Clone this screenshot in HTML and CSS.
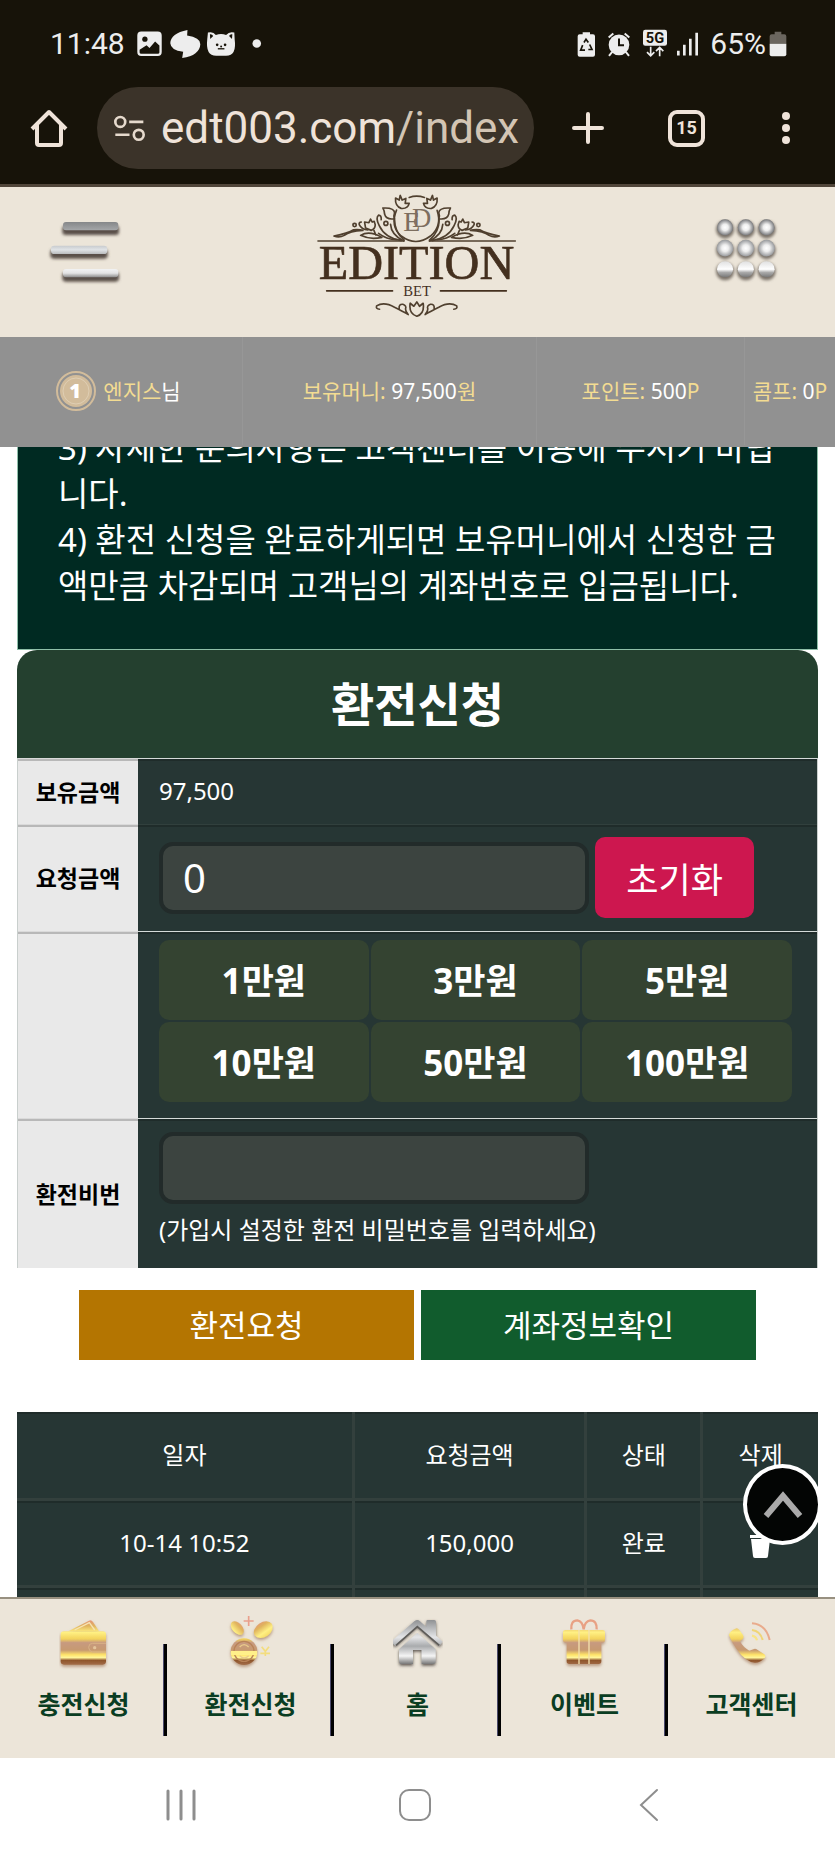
FILE: index.html
```html
<!DOCTYPE html>
<html lang="ko">
<head>
	<meta charset="utf-8">
	<meta name="viewport" content="width=device-width, initial-scale=1">
	<title>EDITION BET</title>
	<link rel="stylesheet" href="styles.css">
</head>
<body>
	<div class="browser">
		<div class="status">
			<span class="status-text">11:48</span>
			<svg class="status-left" viewBox="405 80 390 100" width="130" height="33" fill="#ededed">
				<path fill-rule="evenodd" d="M422 94h50q12 0 12 12v50q0 12-12 12h-50q-12 0-12-12v-50q0-12 12-12zM417 149v8q0 4 5 4h50q5 0 5-4v-21l-13-12-17 20-9-9z"/>
				<circle cx="433" cy="117" r="8" fill="#171309"/>
				<path d="M562 89q-51 10-52 40 1 21 39 26l-3 19q53-8 55-42 0-20-40-26z"/>
				<path d="M624 97q16-4 24 7 16-6 31 0 10-11 25-7l1 20q7 50-26 50h-30q-33 0-27-50z"/>
				<path fill="#171309" d="M630 102q7-1 10 5l-9 9zM698 102q-7-1-10 5l9 9z"/>
				<g fill="#171309"><circle cx="652" cy="134" r="4"/><circle cx="676" cy="134" r="4"/><circle cx="664" cy="139" r="3"/><path d="M654 144h20v4h-20z"/></g>
				<circle cx="772" cy="130" r="13"/>
			</svg>
			<svg class="status-right" viewBox="483 80 369 95" width="123" height="32" fill="#ededed">
				<path d="M491 98h9v-6h22v6h9q6 0 6 6v56q0 6-6 6h-40q-6 0-6-6v-56q0-6 6-6z"/>
				<path d="M504 123l6-10 7 10M521 129l7 15h-11M507 146h-13l6-15" fill="none" stroke="#171309" stroke-width="5"/>
				<circle cx="609" cy="130" r="31"/>
				<path d="M578 108l14-12M640 108l-14-12M588 152l-9 11M630 152l9 11" stroke="#ededed" stroke-width="6"/>
				<path d="M609 111v20h15" fill="none" stroke="#171309" stroke-width="6"/>
				<rect x="681" y="85" width="72" height="48" rx="7"/>
				<text x="717" y="125" text-anchor="middle" font-family="Roboto, sans-serif" font-size="44" font-weight="700" fill="#171309">5G</text>
				<path d="M704 136v26M693 152l11 11 11-11M731 164v-25M720 149l11-11 11 11" fill="none" stroke="#ededed" stroke-width="5"/>
				<path d="M783 148h8v14h-8zM801 130h8v32h-8zM819 112h8v50h-8zM838 94h8v68h-8z"/>
			</svg>
			<span class="status-text">65%</span>
			<svg class="battery" viewBox="1060 90 54 78" width="18" height="26">
				<path d="M1068 100h9v-8h20v8h9q6 0 6 6v22h-50v-22q0-6 6-6z" fill="#6b665f"/>
				<path d="M1062 128h50v32q0 6-6 6h-38q-6 0-6-6z" fill="#ededed"/>
			</svg>
		</div>
		<div class="toolbar">
			<button type="button" class="tool" aria-label="홈">
				<svg viewBox="0 0 38 38" width="38" height="38" fill="none" stroke="#efe3d9" stroke-width="4" stroke-linejoin="round"><path d="M2 20L19 3l17 17M7 16v18q0 2 2 2h20q2 0 2-2V16"/></svg>
			</button>
			<button type="button" class="address">
				<svg viewBox="344 344 94 80" width="31" height="27" fill="none" stroke="#e6dacd" stroke-width="8"><circle cx="363" cy="364" r="15"/><path d="M390 364h43M348 403h43"/><circle cx="419" cy="403" r="15"/></svg>
				<span>edt003.com<span class="path">/index</span></span>
			</button>
			<div class="tools">
				<button type="button" class="tool" aria-label="새 탭">
					<svg viewBox="0 0 32 32" width="32" height="32" stroke="#efe3d9" stroke-width="4" stroke-linecap="round"><path d="M16 2v28M2 16h28"/></svg>
				</button>
				<button type="button" class="tool tabs">15</button>
				<button type="button" class="tool" aria-label="메뉴">
					<svg viewBox="0 0 10 34" width="10" height="34" fill="#efe3d9"><circle cx="5" cy="5" r="4"/><circle cx="5" cy="17" r="4"/><circle cx="5" cy="29" r="4"/></svg>
				</button>
			</div>
		</div>
	</div>

	<header class="site-header">
		<div class="brand">
			<button type="button" class="tool" aria-label="전체메뉴">
				<svg viewBox="140 119 225 195" width="75" height="65">
					<defs>
						<linearGradient id="bar1" x2="0" y2="1"><stop offset="0" stop-color="#858789"/><stop offset="1" stop-color="#a5a7a9"/></linearGradient>
						<linearGradient id="bar2" x2="0" y2="1"><stop offset="0" stop-color="#c8cbce"/><stop offset=".5" stop-color="#e0e3e6"/><stop offset="1" stop-color="#b9bbbd"/></linearGradient>
						<linearGradient id="bar3" x2="0" y2="1"><stop offset="0" stop-color="#f2f3f4"/><stop offset=".5" stop-color="#e3e3e4"/><stop offset="1" stop-color="#8b8b8b"/></linearGradient>
						<filter id="soft" x="-20%" y="-60%" width="140%" height="260%"><feGaussianBlur stdDeviation="5"/></filter>
					</defs>
					<g fill="#5a5048" filter="url(#soft)"><rect x="186" y="136" width="170" height="28" rx="10"/><rect x="150" y="207" width="172" height="28" rx="10"/><rect x="186" y="276" width="170" height="28" rx="10"/></g>
					<rect x="188" y="125" width="166" height="25" rx="9" fill="url(#bar1)"/>
					<rect x="152" y="196" width="169" height="25" rx="10" fill="url(#bar2)"/>
					<rect x="188" y="266" width="166" height="25" rx="9" fill="url(#bar3)"/>
				</svg>
			</button>
			<a href="#" class="logo">
				<svg viewBox="50 21 610 390" width="203" height="130" fill="none" stroke="#50402f" stroke-width="5" stroke-linecap="round" stroke-linejoin="round">
					<path d="M56 183h258M391 183h258"/>
					<path d="M292 90q-20 48 14 78 44 33 88 0 36-30 20-77M330 52q22-8 46 0"/>
					<path d="M303 46l-3 14-11-6q-2 24 17 31 20 2 24-15l-12 0 2-15-11 5zM400 46l3 14 11-6q2 24-17 31-20 2-24-15l12 0-2-15 11 5z"/>
					<path d="M251 84q34-2 35 14-4 10 0 18-25 4-30-14 0-10-5-18zM454 84q-34-2-35 14 4 10 0 18 25 4 30-14 0-10 5-18z"/>
					<path d="M246 119q1-14-8-14-10 8 2 32 17 37 66 45M274 133q2 32 40 50M459 119q-1-14 8-14 10 8-2 32-17 37-66 45M431 133q-2 32-40 50"/>
					<path d="M286 118q0 38 29 62M420 118q0 38-29 62M238 160q24 18 53 19M467 160q-24 18-53 19"/>
					<circle cx="260" cy="130" r="6"/><circle cx="445" cy="130" r="6"/><circle cx="166" cy="135" r="5"/><circle cx="538" cy="135" r="5"/>
					<path d="M214 117l-5 11-13-2 3 18 17 7q12-5 12-17l-3-10-6 2zM491 117l5 11 13-2-3 18-17 7q-12-5-12-17l3-10 6 2z"/>
					<path d="M186 126q-8 0-6 8 7 15 26 16M519 126q8 0 6 8-7 15-26 16"/>
					<path d="M104 168q42-8 59-19 16-2 28 2-40 2-56 15-15 8-31 2zM601 168q-42-8-59-19-16-2-28 2 40 2 56 15 15 8 31 2z"/>
					<path d="M184 166q26-16 64 6-36 8-64-6zM521 166q-26-16-64 6 36 8 64-6zM224 151l6 14M481 151l-6 14"/>
					<path d="M82 333h198M424 333h198" stroke="#44301f"/>
					<path d="M241 388q-12-1-9-10 22-14 54 4 26 13 40 21M300 386q-2-14 11-13 12 4 8 14 0 8 8 17M464 388q12-1 9-10-22-14-54 4-26 13-40 21M405 386q2-14-11-13-12 4-8 14 0 8-8 17"/>
					<path d="M353 366l-9 13-11-9q-5 32 20 39 24-7 19-39l-11 9z"/>
					<g fill="#44301f" stroke="none" font-family="'Liberation Serif', serif" text-anchor="middle">
						<text x="338" y="153" font-size="84" fill="#7d6e5f">E</text>
						<text x="367" y="141" font-size="80" fill="#7d6e5f">D</text>
						<text x="352" y="298" font-size="145" stroke="#44301f" stroke-width="2">EDITION</text>
						<text x="354" y="347" font-size="44">BET</text>
					</g>
				</svg>
			</a>
			<button type="button" class="tool" aria-label="바로가기">
				<svg viewBox="540 119 200 200" width="67" height="67">
					<defs>
						<radialGradient id="ball" cy=".5"><stop offset="0" stop-color="#fff"/><stop offset=".4" stop-color="#eee"/><stop offset="1" stop-color="#96989b"/></radialGradient>
						<radialGradient id="ballDark"><stop offset="0" stop-color="#fff"/><stop offset=".4" stop-color="#eee"/><stop offset="1" stop-color="#77787b"/></radialGradient>
						<linearGradient id="ballHalf" x2="0" y2="1"><stop offset="0" stop-color="#e0e0e0"/><stop offset=".5" stop-color="#fff"/><stop offset=".7" stop-color="#aaa"/><stop offset="1" stop-color="#777"/></linearGradient>
						<filter id="softBall" x="-20%" y="-20%" width="140%" height="140%"><feGaussianBlur stdDeviation="5"/></filter>
					</defs>
					<g fill="#7a7269" filter="url(#softBall)"><circle cx="576" cy="150" r="27"/><circle cx="638" cy="150" r="27"/><circle cx="700" cy="150" r="27"/><circle cx="576" cy="212" r="27"/><circle cx="638" cy="212" r="27"/><circle cx="700" cy="212" r="27"/><circle cx="576" cy="275" r="27"/><circle cx="638" cy="275" r="27"/><circle cx="700" cy="275" r="27"/></g>
					<g fill="url(#ballDark)"><circle cx="576" cy="144" r="24"/><circle cx="638" cy="144" r="24"/><circle cx="700" cy="144" r="24"/></g>
					<g fill="url(#ball)"><circle cx="576" cy="206" r="25"/><circle cx="638" cy="206" r="25"/><circle cx="700" cy="206" r="25"/></g>
					<g fill="url(#ballHalf)"><circle cx="576" cy="269" r="24"/><circle cx="638" cy="269" r="24"/><circle cx="700" cy="269" r="24"/></g>
				</svg>
			</button>
		</div>
		<div class="wallet">
			<div class="user">
				<svg viewBox="0 0 42 42" width="42" height="42">
					<circle cx="21" cy="21" r="19" fill="none" stroke="#d2bc9b" stroke-width="2"/>
					<circle cx="21" cy="21" r="16" fill="#d2bc9b"/>
					<circle cx="21" cy="21" r="13" fill="none" stroke="#dfceb3" stroke-width="1"/>
					<text x="20" y="28" text-anchor="middle" font-family="Open Sans, sans-serif" font-size="20" font-weight="800" fill="#fff">1</text>
				</svg>
				<span>엔지스<b>님</b></span>
			</div>
			<div>보유머니: <b>97,500</b>원</div>
			<div>포인트: <b>500</b>P</div>
			<div>콤프: <b>0</b>P</div>
		</div>
	</header>

	<main>
		<div class="notice">
			<p>3) 자세한 문의사항은 고객센터를 이용해 주시기 바랍니다.</p>
			<p>4) 환전 신청을 완료하게되면 보유머니에서 신청한 금액만큼 차감되며 고객님의 계좌번호로 입금됩니다.</p>
		</div>

		<form>
			<h1>환전신청</h1>
			<table class="exchange">
				<tr>
					<th>보유금액</th>
					<td class="balance">97,500</td>
				</tr>
				<tr>
					<th><label for="amount">요청금액</label></th>
					<td class="amount">
						<div class="amount-row">
							<input type="text" id="amount" value="0">
							<button type="reset" class="reset">초기화</button>
						</div>
					</td>
				</tr>
				<tr class="line">
					<th></th>
					<td class="quick">
						<div class="quick-grid">
							<button type="button">1만원</button>
							<button type="button">3만원</button>
							<button type="button">5만원</button>
							<button type="button">10만원</button>
							<button type="button">50만원</button>
							<button type="button">100만원</button>
						</div>
					</td>
				</tr>
				<tr class="line">
					<th><label for="pin">환전비번</label></th>
					<td class="pin">
						<input type="password" id="pin">
						<p>(가입시 설정한 환전 비밀번호를 입력하세요)</p>
					</td>
				</tr>
			</table>
			<div class="actions">
				<button type="submit" class="request">환전요청</button>
				<button type="button" class="account">계좌정보확인</button>
			</div>
		</form>

		<table class="history">
			<colgroup>
				<col class="col-date">
				<col class="col-amount">
				<col class="col-state">
				<col>
			</colgroup>
			<tr>
				<th>일자</th>
				<th>요청금액</th>
				<th>상태</th>
				<th>삭제</th>
			</tr>
			<tr>
				<td>10-14 10:52</td>
				<td>150,000</td>
				<td>완료</td>
				<td>
					<button type="button" class="tool" aria-label="내역 삭제">
						<svg viewBox="0 0 24 26" width="24" height="26" fill="#fff"><path d="M1 3h6l2-2h6l2 2h6v3H1zM2 7h19l-2 17q0 2-2 2H6q-2 0-2-2z"/></svg>
					</button>
				</td>
			</tr>
			<tr><td></td><td></td><td></td><td></td></tr>
		</table>
	</main>

	<a href="#" class="to-top" aria-label="맨 위로">
		<svg viewBox="0 0 40 28" width="40" height="28" fill="none" stroke="#aaa" stroke-width="6"><path d="M3 25L20 5l17 20"/></svg>
	</a>

	<nav class="bottom-nav">
		<a href="#">
			<svg viewBox="175 75 150 165" width="50" height="55">
				<defs>
					<linearGradient id="gold" gradientUnits="userSpaceOnUse" x1="0" y1="88" x2="0" y2="228">
						<stop offset="0" stop-color="#e58e7c"/><stop offset=".14" stop-color="#e0b45e"/><stop offset=".28" stop-color="#fff083"/><stop offset=".42" stop-color="#f3d35c"/><stop offset=".5" stop-color="#c79a80"/><stop offset=".66" stop-color="#c79a70"/><stop offset=".76" stop-color="#ffe46a"/><stop offset=".82" stop-color="#fff59a"/><stop offset=".88" stop-color="#8f552c"/><stop offset="1" stop-color="#a87350"/>
					</linearGradient>
					<filter id="glow" x="-20%" y="-20%" width="140%" height="150%"><feGaussianBlur stdDeviation="1.5" result="body"/><feDropShadow in="body" dx="0" dy="6" stdDeviation="5" flood-color="#9a6a4a" flood-opacity=".6"/></filter>
				</defs>
				<g fill="url(#gold)" filter="url(#glow)">
					<path d="M203 124l62-32q7-3 12 4l18 28z"/>
					<path d="M190 124h116q10 0 10 10v80q0 10-10 10H190q-10 0-10-10v-80q0-10 10-10z"/>
				</g>
				<path d="M222 120l44-22 16 22" fill="none" stroke="#f6e3b4" stroke-width="4"/>
				<path d="M316 160h-40q-12 0-12 12t12 14h40" fill="none" stroke="#d8b186" stroke-width="3"/>
				<circle cx="282" cy="173" r="5" fill="#e3c49b"/>
			</svg>
			<span>충전신청</span>
		</a>
		<a href="#">
			<svg viewBox="677 75 150 165" width="50" height="55">
				<g fill="url(#gold)" filter="url(#glow)">
					<ellipse cx="711" cy="114" rx="24" ry="15" transform="rotate(48 711 114)"/>
					<ellipse cx="789" cy="119" rx="31" ry="22" transform="rotate(-35 789 119)"/>
					<circle cx="731" cy="185" r="40"/>
				</g>
				<path d="M784 170l11 14 11-14M795 184v14M780 190h29" fill="none" stroke="#f3dd7e" stroke-width="5"/>
				<path d="M745 78v30M730 93h30" stroke="#e9a08c" stroke-width="5"/>
				<circle cx="731" cy="184" r="30" fill="none" stroke="#b98358" stroke-width="4"/>
				<path d="M718 171q13-14 27 0M718 197q13 14 27 0" fill="none" stroke="#eacb8b" stroke-width="4"/>
				<path d="M692 189h78" stroke="#fff08a" stroke-width="12"/>
			</svg>
			<span>환전신청</span>
		</a>
		<a href="#">
			<svg viewBox="1177 75 150 165" width="50" height="55">
				<defs>
					<linearGradient id="silver" gradientUnits="userSpaceOnUse" x1="0" y1="88" x2="0" y2="222">
						<stop offset="0" stop-color="#8c8e90"/><stop offset=".4" stop-color="#e4e5e7"/><stop offset=".6" stop-color="#a9abad"/><stop offset=".82" stop-color="#f5f5f5"/><stop offset="1" stop-color="#777"/>
					</linearGradient>
					<filter id="shade" x="-20%" y="-20%" width="140%" height="150%"><feDropShadow dx="0" dy="5" stdDeviation="4" flood-color="#3b342e" flood-opacity=".8"/></filter>
				</defs>
				<g fill="url(#silver)" filter="url(#shade)">
					<path d="M1250 128l-55 50v36q0 8 8 8h34v-42h26v42h34q8 0 8-8v-36z"/>
					<path d="M1250 90q4 0 8 4l19 17v-17q0-4 4-4h20q5 0 5 5v42l20 18-10 12-66-58-66 58-13-12 70-61q5-4 9-4z"/>
				</g>
				<path d="M1186 166l64-56 66 56" fill="none" stroke="#5f5d5a" stroke-width="5"/>
			</svg>
			<span>홈</span>
		</a>
		<a href="#">
			<svg viewBox="432 75 150 165" width="50" height="55">
				<g fill="url(#gold)" filter="url(#glow)">
					<path d="M449 120h111q7 0 7 7v24q0 7-7 7h-4v56q0 8-8 8h-88q-8 0-8-8v-56h-4q-7 0-7-7v-24q0-7 8-7z"/>
				</g>
				<path d="M489 120v102M519 120v102" stroke="#f4e0ad" stroke-width="4"/>
				<path d="M466 118q-2-27 18-27 16 2 19 27 3-25 20-27 20 0 19 27" fill="none" stroke="#e8a184" stroke-width="7"/>
			</svg>
			<span>이벤트</span>
		</a>
		<a href="#">
			<svg viewBox="933 75 150 165" width="50" height="55">
				<g fill="url(#gold)" filter="url(#glow)">
					<path d="M958 116q7-3 12 4l11 15q4 6-1 12l-8 7q9 18 28 28l12-4q5-5 13 2l20 13q6 5 1 11-14 15-30 14-26-2-55-42-15-21-22-41 2-12 19-19z"/>
				</g>
				<path d="M1008 100q42 3 53 50" fill="none" stroke="#e9ab8c" stroke-width="6"/>
				<path d="M1008 120q25 3 32 30" fill="none" stroke="#f0d576" stroke-width="6"/>
				<path d="M1008 137q12 2 15 14" fill="none" stroke="#f8e486" stroke-width="7"/>
			</svg>
			<span>고객센터</span>
		</a>
	</nav>

	<div class="system-nav">
		<button type="button" class="tool" aria-label="최근 앱">
			<svg viewBox="0 0 32 32" width="32" height="32" stroke="#8e8e8e" stroke-width="3" stroke-linecap="round"><path d="M3 2v28M16 2v28M29 2v28"/></svg>
		</button>
		<button type="button" class="tool" aria-label="홈 화면">
			<svg viewBox="0 0 34 34" width="34" height="34" fill="none" stroke="#8e8e8e" stroke-width="2"><rect x="2" y="2" width="30" height="30" rx="9"/></svg>
		</button>
		<button type="button" class="tool" aria-label="뒤로">
			<svg viewBox="0 0 20 34" width="20" height="34" fill="none" stroke="#8e8e8e" stroke-width="2" stroke-linecap="round"><path d="M18 2L2 17l16 15"/></svg>
		</button>
	</div>
</body>
</html>
```

FILE: styles.css
```css
* {
	box-sizing: border-box;
}

body {
	margin: 0;
	height: 100vh;
	display: flex;
	flex-direction: column;
	overflow: hidden;
	background: #fff;
	color: #fff;
	font-family: 'Noto Sans', 'Noto Sans CJK KR', sans-serif;
	font-size: 24px;
	line-height: 36px;
}

button,
input {
	font-family: inherit;
	color: inherit;
	border: 0;
}

button {
	padding: 0;
}

a {
	text-decoration: none;
}

svg {
	display: block;
	flex: none;
}

p {
	margin: 0;
}

.tool {
	background: none;
}

/* browser bar */
.browser {
	flex: none;
	background: #171309;
	border-bottom: 3px solid #51463a;
	font-family: Roboto, sans-serif;
	position: relative;
	z-index: 2;
}

.status {
	display: flex;
	align-items: center;
	height: 87px;
	padding: 0 48px 0 50px;
	font-size: 30px;
	color: #ededed;
}

.status-left {
	margin-left: 10px;
}

.status-right {
	margin-left: auto;
	margin-right: 10px;
}

.battery {
	margin-left: 3px;
}

.toolbar {
	display: grid;
	grid-template-columns: 97px 1fr 301px;
	align-items: center;
	padding-bottom: 15px;
}

.toolbar > .tool {
	justify-self: center;
}

.address {
	display: flex;
	align-items: center;
	gap: 16px;
	min-width: 0;
	height: 82px;
	padding: 0 14px 0 17px;
	border-radius: 41px;
	background: #3b3329;
	color: #efe3d9;
	font-size: 44px;
	line-height: 52px;
	white-space: nowrap;
}

.address .path {
	color: #d3c5b4;
}

.tools {
	display: grid;
	grid-template-columns: repeat(3, 1fr);
	align-items: center;
	justify-items: center;
	padding-left: 4px;
}

.tabs {
	width: 37px;
	height: 37px;
	border: 4px solid #efe3d9;
	border-radius: 9px;
	color: #efe3d9;
	font-size: 18px;
	font-weight: 700;
	line-height: 28px;
}

/* site header */
.site-header {
	flex: none;
	position: relative;
	z-index: 2;
}

.brand {
	display: flex;
	align-items: center;
	justify-content: space-between;
	padding: 0 55px 20px 47px;
	background: #ece5d9;
}

.wallet {
	display: grid;
	grid-template-columns: 242fr 294fr 208fr 91fr;
	height: 110px;
	padding-bottom: 2px;
	background: #919191;
	color: #f3dc92;
	font-size: 21px;
	white-space: nowrap;
}

.wallet > div {
	display: flex;
	align-items: center;
	justify-content: center;
	white-space: pre;
	border-left: 1px solid #979797;
}

.wallet .user {
	gap: 6px;
	padding-right: 6px;
	border-left: 0;
}

.wallet b {
	font-weight: 400;
	color: #fff;
}

/* page content, scrolled a little under the header */
main {
	flex: 1;
	min-height: 0;
	margin-top: -63px;
	padding: 0 17px;
	overflow: hidden;
}

.notice {
	padding: 40px;
	border: 1px solid #8fbfa9;
	background: #002a22;
	font-size: 33px;
	line-height: 46px;
}

h1 {
	margin: 0;
	padding: 24px 0;
	border-radius: 20px 20px 0 0;
	background: #24402f;
	font-size: 47px;
	line-height: 60px;
	text-align: center;
}

.exchange {
	width: 100%;
	border-spacing: 0;
	border: solid #c9cfcd;
	border-width: 0 1px;
}

.exchange th {
	width: 120px;
	padding: 0;
	border-top: 1px solid #dadada;
	box-shadow: inset 0 2px 0 #b8b8b8;
	background: #e9e9e9;
	color: #000;
	font-size: 23px;
}

.exchange td {
	padding: 0 25px 0 21px;
	border-top: 1px solid #31403d;
	box-shadow: inset 0 2px 0 #1f2c2a;
	background: #263634;
}

.exchange tr:first-child td,
.exchange .line td {
	border-top-color: #d5dbd9;
}

.exchange .balance {
	padding-top: 14px;
	padding-bottom: 15px;
}

.exchange .amount {
	padding-top: 12px;
	padding-bottom: 13px;
}

.exchange .quick {
	padding-top: 8px;
	padding-bottom: 16px;
}

.exchange .pin {
	padding-top: 13px;
	padding-bottom: 20px;
}

.amount-row {
	display: flex;
	align-items: center;
	gap: 6px;
}

.exchange input {
	display: block;
	width: 68%;
	height: 72px;
	padding: 0 20px;
	border: 4px solid #222b2a;
	border-radius: 14px;
	background: #3c4440;
	font-size: 40px;
}

.pin p {
	margin-top: 8px;
}

.reset {
	width: 25%;
	height: 81px;
	border-radius: 10px;
	background: #cd174f;
	font-size: 35px;
}

.quick-grid {
	display: grid;
	grid-template-columns: repeat(3, 1fr);
	gap: 2px;
}

.quick-grid button {
	height: 80px;
	padding-bottom: 4px;
	border-radius: 10px;
	background: #344331;
	font-size: 35px;
	font-weight: 700;
}

.actions {
	display: grid;
	grid-template-columns: 1fr 1fr;
	gap: 7px;
	padding: 22px 62px 52px;
}

.actions button {
	height: 70px;
	padding-bottom: 4px;
	font-size: 31px;
}

.request {
	background: #b47501;
}

.account {
	background: #115c2d;
}

.history {
	width: 100%;
	table-layout: fixed;
	border-collapse: collapse;
	background: #263634;
	text-align: center;
}

.history .col-date {
	width: 42%;
}

.history .col-amount {
	width: 29%;
}

.history .col-state {
	width: 14.5%;
}

.history th,
.history td {
	height: 87px;
	padding: 0;
	border-right: 3px solid #33403d;
	border-bottom: 3px solid #33403d;
	box-shadow: inset 0 2px 0 #1f2c2a;
	font-weight: 400;
}

.history th:last-child,
.history td:last-child {
	border-right: 0;
}

.history .tool {
	display: inline-block;
	vertical-align: middle;
}

.to-top {
	position: fixed;
	right: 13px;
	bottom: 311px;
	z-index: 3;
	display: flex;
	align-items: center;
	justify-content: center;
	width: 79px;
	height: 81px;
	border: 4px solid #fff;
	border-radius: 50%;
	background: #030504;
}

/* bottom menu */
.bottom-nav {
	flex: none;
	display: grid;
	grid-template-columns: repeat(5, 1fr);
	border-top: 2px solid #989080;
	background: #ece5d9;
}

.bottom-nav a {
	display: flex;
	flex-direction: column;
	align-items: center;
	gap: 16px;
	padding: 16px 0 36px;
	color: #0a3d22;
	font-size: 25px;
	font-weight: 700;
	background: linear-gradient(to right, #4b4a6b 1px, #000 1px) right 0 bottom 22px / 4px 92px no-repeat;
}

.bottom-nav a:last-child {
	background: none;
}

.system-nav {
	flex: none;
	display: grid;
	grid-template-columns: repeat(3, 1fr);
	align-items: center;
	justify-items: center;
	height: 98px;
	padding: 0 69px 4px 64px;
}
```
